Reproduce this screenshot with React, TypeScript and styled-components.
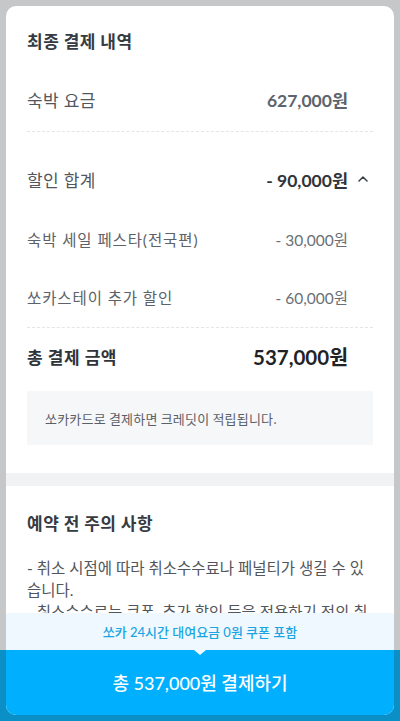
import type { FC } from 'react';
import styled, { createGlobalStyle } from 'styled-components';

const GlobalStyle = createGlobalStyle`
    html, body {
        margin: 0;
        padding: 0;
    }

    body {
        font-family: 'Noto Sans CJK KR', 'Noto Sans', sans-serif;
        -webkit-font-smoothing: antialiased;
    }

    * {
        box-sizing: border-box;
    }
`;

const num = `Lato, 'Noto Sans CJK KR', sans-serif`;

// dimmed page behind the sheet: the fixed pay button shows through at the bottom
const Backdrop = styled.div`
    height: 721px;
    padding: 6px;
    background: linear-gradient(to bottom, #c6c7c8 650px, #0a8fc6 650px);
    display: flex;
`;

const Sheet = styled.div`
    flex: 1;
    border-radius: 10px;
    overflow: hidden;
    background: #fff;
    display: flex;
    flex-direction: column;
`;

const Scroll = styled.div`
    flex: 1;
    min-height: 0;
    overflow: hidden;
`;

const Section = styled.section<{ $top: number; $bottom: number }>`
    padding: ${(p) => p.$top}px 21px ${(p) => p.$bottom}px;
`;

const Title = styled.h2`
    margin: 0;
    font-size: 17px;
    line-height: 24px;
    font-weight: 700;
    color: #363b42;
    letter-spacing: 0.5px;
`;

const Row = styled.div<{ $h: number; $mt?: number }>`
    display: flex;
    align-items: center;
    height: ${(p) => p.$h}px;
    margin-top: ${(p) => p.$mt ?? 0}px;
`;

const Label = styled.span<{ $size: number; $color: string; $ls: number; $bold?: boolean }>`
    flex: 1;
    font-family: ${num};
    font-size: ${(p) => p.$size}px;
    letter-spacing: ${(p) => p.$ls}px;
    color: ${(p) => p.$color};
    font-weight: ${(p) => (p.$bold ? 700 : 400)};
`;

const Value = styled.span<{ $size: number; $color: string; $weight: number }>`
    font-family: ${num};
    font-size: ${(p) => p.$size}px;
    color: ${(p) => p.$color};
    font-weight: ${(p) => p.$weight};
    white-space: pre;
`;

const Trail = styled.span`
    width: 25px;
    display: flex;
    justify-content: flex-end;
    padding-right: 5px;
`;

const Dashed = styled.hr<{ $mt: number }>`
    margin: ${(p) => p.$mt}px 0 0;
    border: 0;
    border-top: 1px dashed #e4e5e7;
`;

const InfoBox = styled.div`
    margin-top: 9px;
    height: 54px;
    padding: 0 18px;
    display: flex;
    align-items: center;
    background: #f6f7f9;
    font-size: 13px;
    letter-spacing: 0.2px;
    color: #5b6067;
`;

const Band = styled.div`
    height: 13px;
    background: #f1f2f4;
`;

const Notice = styled.p`
    margin: 22px 0 0;
    font-family: ${num};
    font-size: 15.5px;
    line-height: 22px;
    color: #51565c;
`;

const Coupon = styled.div`
    position: relative;
    flex: none;
    height: 37px;
    display: flex;
    align-items: center;
    justify-content: center;
    background: #eff8fe;
    font-family: ${num};
    font-size: 13px;
    font-weight: 500;
    color: #1ba5e3;

    &::after {
        content: '';
        position: absolute;
        left: 50%;
        bottom: -5px;
        margin-left: -6px;
        border-left: 6px solid transparent;
        border-right: 6px solid transparent;
        border-top: 5px solid #eff8fe;
    }
`;

const PayButton = styled.button`
    flex: none;
    display: block;
    width: 100%;
    height: 65px;
    border: 0;
    background: #00b0ff;
    color: #fff;
    font-family: ${num};
    font-size: 18px;
    font-weight: 500;
    padding-bottom: 2px;
`;

const ChevronUp: FC = () => (
    <svg width="10" height="6" viewBox="0 0 10 6">
        <polyline points="1,5 5,1 9,5" fill="none" stroke="#3a3f45" strokeWidth="1.5" strokeLinecap="round" strokeLinejoin="round" />
    </svg>
);

const App: FC = () => {
    return (
        <>
            <GlobalStyle />
            <Backdrop>
                <Sheet>
                    <Scroll>
                        <Section $top={23} $bottom={28}>
                            <Title>최종 결제 내역</Title>
                            <Row $h={52} $mt={20}>
                                <Label $size={17} $ls={0.4} $color="#52575d">숙박 요금</Label>
                                <Value $size={17.5} $color="#5c646d" $weight={700}>627,000원</Value>
                                <Trail />
                            </Row>
                            <Dashed $mt={6} />
                            <Row $h={52} $mt={21}>
                                <Label $size={17} $ls={0.4} $color="#52575d">할인 합계</Label>
                                <Value $size={17.5} $color="#30353b" $weight={700}>- 90,000원</Value>
                                <Trail>
                                    <ChevronUp />
                                </Trail>
                            </Row>
                            <Row $h={58} $mt={5}>
                                <Label $size={15.5} $ls={0.9} $color="#5d6268">숙박 세일 페스타(전국편)</Label>
                                <Value $size={15.5} $color="#6a6f75" $weight={400}>- 30,000원</Value>
                                <Trail />
                            </Row>
                            <Row $h={58}>
                                <Label $size={15.5} $ls={0.9} $color="#5d6268">쏘카스테이 추가 할인</Label>
                                <Value $size={15.5} $color="#6a6f75" $weight={400}>- 60,000원</Value>
                                <Trail />
                            </Row>
                            <Dashed $mt={1} />
                            <Row $h={52} $mt={2}>
                                <Label $size={17} $ls={0.5} $color="#2f343a" $bold>총 결제 금액</Label>
                                <Value $size={20.5} $color="#1f2328" $weight={700}>537,000원</Value>
                                <Trail />
                            </Row>
                            <InfoBox>쏘카카드로 결제하면 크레딧이 적립됩니다.</InfoBox>
                        </Section>
                        <Band />
                        <Section $top={25} $bottom={28}>
                            <Title>예약 전 주의 사항</Title>
                            <Notice>
                                - 취소 시점에 따라 취소수수료나 페널티가 생길 수 있습니다.
                                <br />- 취소수수료는 쿠폰, 추가 할인 등을 적용하기 전의 취소 요금을 기준으로 부과됩니다.
                            </Notice>
                        </Section>
                    </Scroll>
                    <Coupon>쏘카 24시간 대여요금 0원 쿠폰 포함</Coupon>
                    <PayButton>총 537,000원 결제하기</PayButton>
                </Sheet>
            </Backdrop>
        </>
    );
};

export default App;
